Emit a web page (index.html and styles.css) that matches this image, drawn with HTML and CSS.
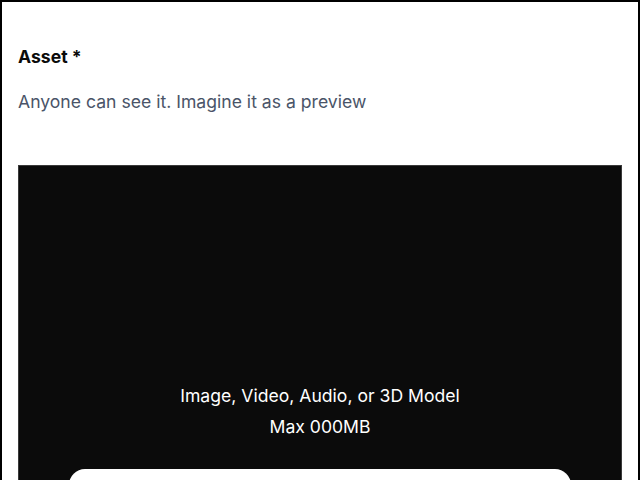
FILE: index.html
```html
<!DOCTYPE html>
<html>
<head>
<meta charset="utf-8">
<link rel="stylesheet" href="styles.css">
</head>
<body>
<div class="frame">
  <section class="field">
    <h2 class="label">Asset *</h2>
    <p class="hint">Anyone can see it. Imagine it as a preview</p>
    <div class="dropzone">
      <div class="drop-text">
        <p class="types">Image, Video, Audio, or 3D Model</p>
        <p class="max">Max 000MB</p>
      </div>
      <button class="choose" type="button">Choose File</button>
    </div>
  </section>
</div>
</body>
</html>
```
FILE: styles.css
```css
html, body {
  margin: 0;
  padding: 0;
  background: #fff;
  overflow: hidden;
}
body {
  font-family: Inter, "Noto Sans", sans-serif;
}
.frame {
  border: 2px solid #000;
  border-bottom: none;
  min-height: 600px;
  box-sizing: border-box;
}
.field {
  padding: 43px 16px 0 16px;
}
.label {
  margin: 0;
  font-size: 17.6px;
  line-height: 24px;
  font-weight: 700;
  color: #0b0b0b;
}
.hint {
  margin: 21px 0 0 0;
  font-size: 17.6px;
  line-height: 24px;
  color: #4a5468;
}
.dropzone {
  margin-top: 51px;
  background: #0b0b0b;
  border: 1px solid #3a3a3a;
  height: 460px;
  padding: 218px 50px 0 50px;
  box-sizing: border-box;
  display: flex;
  flex-direction: column;
  align-items: stretch;
}
.drop-text {
  text-align: center;
  color: #fff;
  font-size: 17.6px;
  line-height: 24px;
}
.drop-text p {
  margin: 0;
}
.drop-text .max {
  margin-top: 7px;
}
.choose {
  margin-top: 30px;
  height: 80px;
  border: none;
  border-radius: 16px;
  background: #fff;
  color: #0b0b0b;
  font-family: Inter, sans-serif;
  font-size: 17.6px;
  font-weight: 600;
}
```
